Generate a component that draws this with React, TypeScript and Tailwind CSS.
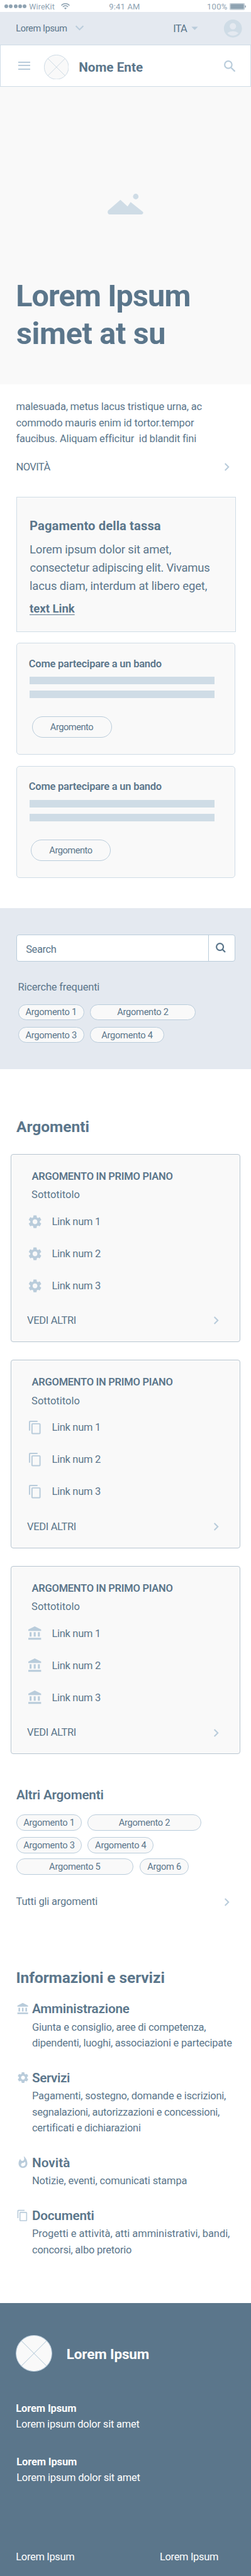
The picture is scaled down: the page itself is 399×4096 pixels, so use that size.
import type { ReactNode } from "react";
import type { IconType } from "react-icons";
import {
  MdAccountBalance,
  MdAccountCircle,
  MdArrowDropDown,
  MdChevronRight,
  MdContentCopy,
  MdSettings,
  MdWhatshot,
} from "react-icons/md";

function Placeholder({ className }: { className: string }) {
  return (
    <svg viewBox="0 0 40 40" className={className} fill="#f9f9f9" stroke="#b9ccdb">
      <circle cx="20" cy="20" r="19.6" strokeWidth="0.7" />
      <path d="M6.2 6.2 33.8 33.8M33.8 6.2 6.2 33.8" strokeWidth="0.7" />
    </svg>
  );
}

function StatusBar() {
  return (
    <div className="flex h-[19.3px] items-start bg-white text-[#8fa3b2]">
      <div className="mt-[7.2px] ml-[6.9px] flex gap-[1.5px]">
        {[0, 1, 2, 3, 4].map((i) => (
          <span key={i} className="size-[5.9px] rounded-full bg-[#8fa3b2]" />
        ))}
      </div>
      <div className="mt-[3px] ml-[4px] w-[51px] text-[12.5px] leading-[16px] tracking-[0.1px]">WireKit</div>
      <svg viewBox="0 0 28 20" className="mt-[5px] h-[10px] w-[14px]" fill="none" stroke="#8fa3b2" strokeWidth="3">
        <path d="M1 7.5C8-.5 20-.5 27 7.5" />
        <path d="M5.8 12C10.5 6.7 17.5 6.7 22.2 12" />
        <path d="M14 20l-4.2-4.6c2.4-2.2 6-2.2 8.4 0z" fill="#8fa3b2" stroke="none" />
      </svg>
      <div className="mt-[3px] ml-[62px] w-[155.6px] text-[13px] leading-[16px] tracking-[0.15px]">9:41 AM</div>
      <div className="mt-[3px] w-[36.4px] text-[13px] leading-[16px] tracking-[0.3px]">100%</div>
      <svg viewBox="0 0 52 22" className="mt-[4.7px] h-[11px] w-[26px]">
        <rect x="0.7" y="0.7" width="46.6" height="20" rx="2.5" fill="none" stroke="#8fa3b2" strokeWidth="1.2" />
        <rect x="2.6" y="2.6" width="42.8" height="16.2" rx="1" fill="#8fa3b2" />
        <path d="M48.800 7h1.200c1.300 0 2 1.500 2 3.700s-.7 3.700-2 3.700h-1.200z" fill="#8fa3b2" />
      </svg>
    </div>
  );
}

function TopBar() {
  return (
    <div className="flex h-[51.4px] items-center bg-[#e4e9f0]">
      <div className="mt-[2px] ml-[25.3px] w-[93.7px] text-[14.5px] leading-5 tracking-[-0.35px]">Lorem Ipsum</div>
      <svg viewBox="0 0 15 9" className="h-[9px] w-[15px]" fill="none" stroke="#b9ccdb" strokeWidth="2">
        <path d="M1.6 1.3 7.5 7.2 13.4 1.3" />
      </svg>
      <div className="mt-[2px] ml-[141.2px] text-[16.5px] leading-5 tracking-[-0.8px]">ITA</div>
      <MdArrowDropDown className="ml-[0.4px] size-[25px] text-[#b9ccdb]" />
      <MdAccountCircle className="ml-[30.5px] size-[34.5px] text-[#cfdce6]" />
    </div>
  );
}

function Header() {
  return (
    <header className="flex h-[67.5px] items-center border border-[#cfdce6] bg-white">
      <div className="mb-[0.5px] ml-[27.7px] flex w-[19px] flex-col gap-[3.3px]">
        <span className="h-[2.1px] bg-[#b9ccdb]" />
        <span className="h-[2.1px] bg-[#b9ccdb]" />
        <span className="h-[2.1px] bg-[#b9ccdb]" />
      </div>
      <Placeholder className="mt-[4px] ml-[22.2px] size-[39.5px]" />
      <div className="mt-[5px] ml-[15.8px] flex-1 text-[20.7px] leading-6 font-bold">Nome Ente</div>
      <svg viewBox="0 0 37 37" className="mt-[1.600px] mr-[23.800px] size-[18.500px]" fill="none" stroke="#b9ccdb">
        <circle cx="13.800" cy="13.800" r="11.500" strokeWidth="4.300" />
        <path d="M23 23.500 35 35.300" strokeWidth="4.600" />
      </svg>
    </header>
  );
}

function Hero() {
  return (
    <section className="h-[472.6px] bg-[#f9f9f9] pt-[169.4px]">
      <svg viewBox="0 0 57 33" className="ml-[170.5px] h-[33px] w-[57px]" fill="#cfdce6">
        <circle cx="44.8" cy="4.5" r="4.4" />
        <path d="M.8 26.7 20.4 9.7 31.8 20.2 36.6 13.2 56 28.7c1.300 1.300.7 4.300-2.300 4.300H3.500C.5 33-.7 29.500.8 26.700z" />
      </svg>
      <h1 className="mt-[100.3px] text-[48.5px] leading-[59.8px] font-bold">
        <span className="block pl-[25.2px] tracking-[-0.85px]">Lorem Ipsum</span>
        <span className="block pl-[26px] tracking-[-0.35px]">simet at su</span>
      </h1>
    </section>
  );
}

function MoreRow({ children, className }: { children: ReactNode; className: string }) {
  return (
    <div className={"flex h-5 items-center justify-between text-[16.5px] leading-5 " + className}>
      {children}
      <MdChevronRight className="size-[25px] text-[#b9ccdb]" />
    </div>
  );
}

function BandoCard({ pill, className }: { pill: string; className: string }) {
  return (
    <article className={"w-[348px] rounded-[5px] border border-[#cfdce6] bg-[#f9f9f9] pt-[22.9px] " + className}>
      <h3 className="ml-[19.3px] text-[16.5px] leading-5 font-semibold tracking-[-0.24px]">Come partecipare a un bando</h3>
      <div className="mt-[10.5px] ml-[20.5px] h-[11.6px] w-[293.5px] bg-[#cfdce6]" />
      <div className="mt-[10.6px] ml-[20.5px] h-[11.6px] w-[293.5px] bg-[#cfdce6]" />
      <div className={"mt-[28.8px] flex h-[34px] w-[127px] items-center justify-center rounded-full border border-[#b9ccdb] text-[14.7px] leading-5 tracking-[-0.51px] " + pill}>
        Argomento
      </div>
    </article>
  );
}

function Intro() {
  return (
    <section className="pt-[23.6px] pr-[24.5px] pb-[47.9px] pl-[25.5px]">
      <p className="text-[16.5px] leading-[25.5px] whitespace-pre">
        <span className="block tracking-[-0.21px]">malesuada, metus lacus tristique urna, ac</span>
        <span className="block tracking-[-0.17px]">commodo mauris enim id tortor.tempor</span>
        <span className="block tracking-[-0.22px]">faucibus. Aliquam efficitur  id blandit fini</span>
      </p>
      <MoreRow className="mt-[22px] mr-[1.5px]">
        <span className="tracking-[-0.6px]">NOVITÀ</span>
      </MoreRow>
      <article className="mt-[37px] h-[214.8px] border border-[#cfdce6] bg-[#f9f9f9] pt-[33.6px] pl-[20.5px]">
        <h2 className="text-[20.2px] leading-6 font-bold tracking-[0.1px]">Pagamento della tassa</h2>
        <p className="mt-3 text-[18.5px] leading-[28.6px] whitespace-nowrap">
          <span className="block tracking-[-0.18px]">Lorem ipsum dolor sit amet,</span>
          <span className="block pl-[0.5px] tracking-[-0.3px]">consectetur adipiscing elit. Vivamus</span>
          <span className="block tracking-[-0.13px]">lacus diam, interdum at libero eget,</span>
        </p>
        <a className="mt-[9.6px] inline-block text-[18.5px] leading-6 font-bold underline decoration-1 underline-offset-[2.5px]">text Link</a>
      </article>
      <BandoCard className="mt-[17px] h-[178.8px]" pill="ml-[24px]" />
      <BandoCard className="mt-[17.1px] h-[178.7px]" pill="ml-[22.5px]" />
    </section>
  );
}

function Tag({ children, className }: { children: string; className: string }) {
  return (
    <span className={"flex h-[25.4px] items-center justify-center rounded-full border border-[#b9ccdb] bg-[#f9f9f9] text-[14.7px] leading-5 tracking-[-0.3px] " + className}>
      {children}
    </span>
  );
}

function SearchSection() {
  return (
    <section className="h-[256px] bg-[#e4e9f0] pt-[41.8px] pl-[25.5px]">
      <div className="flex h-[42.7px] w-[348px] rounded-[4px] border border-[#b9ccdb] bg-white">
        <div className="flex flex-1 items-center pt-[5px] pl-[14.7px] text-[16.5px] leading-5 tracking-[-0.4px]">Search</div>
        <div className="flex w-[42px] items-center border-l border-[#b9ccdb] pl-[11px]">
          <svg viewBox="0 0 16 16" className="size-[16px]" fill="none" stroke="#5b768b">
            <circle cx="6.6" cy="6.6" r="5.5" strokeWidth="2.2" />
            <path d="M10.4 10.4 15 15" strokeWidth="2.3" />
          </svg>
        </div>
      </div>
      <div className="mt-[31.3px] ml-[3px] text-[16.5px] leading-5 tracking-[-0.2px]">Ricerche frequenti</div>
      <div className="mt-[16.7px] ml-[3.3px] flex gap-[9.1px]">
        <Tag className="w-[104.8px]">Argomento 1</Tag>
        <Tag className="w-[168.5px]">Argomento 2</Tag>
      </div>
      <div className="mt-[10.9px] ml-[3.3px] flex gap-[9.1px]">
        <Tag className="w-[104.8px]">Argomento 3</Tag>
        <Tag className="w-[118.6px]">Argomento 4</Tag>
      </div>
    </section>
  );
}

function TopicCard({ icon: Icon, iconClass }: { icon: IconType; iconClass: string }) {
  return (
    <article className="h-[299.6px] w-[365px] rounded-[4px] border border-[#b8c6d1] bg-[#f9f9f9] pt-[25px]">
      <h3 className="ml-[32.6px] text-[16.5px] leading-5 font-semibold tracking-[-0.27px]">ARGOMENTO IN PRIMO PIANO</h3>
      <div className="mt-[9.6px] ml-[32.1px] text-[16.5px] leading-5">Sottotitolo</div>
      <ul className="mt-[20.6px] flex flex-col gap-[27px]">
        {[1, 2, 3].map((n) => (
          <li key={n} className="flex h-6 items-center text-[16.5px] leading-5 tracking-[-0.3px]">
            <span className="mb-[1px] ml-[24.4px] flex w-[26px] justify-center text-[#b9ccdb]">
              <Icon className={iconClass} />
            </span>
            <span className="ml-[14px]">Link num {n}</span>
          </li>
        ))}
      </ul>
      <MoreRow className="mt-[33.2px] pr-[25.3px] pl-[25px]">
        <span className="tracking-[-0.33px]">VEDI ALTRI</span>
      </MoreRow>
    </article>
  );
}

function Topics() {
  return (
    <section className="pt-[76.8px]">
      <h2 className="ml-[26px] text-[24.5px] leading-[30px] font-bold">Argomenti</h2>
      <div className="mt-[27.6px] ml-[17px] flex flex-col gap-[28px]">
        <TopicCard icon={MdSettings} iconClass="size-[25.3px]" />
        <TopicCard icon={MdContentCopy} iconClass="size-[23.5px]" />
        <TopicCard icon={MdAccountBalance} iconClass="size-[24.4px]" />
      </div>
      <h3 className="mt-[52.4px] ml-[26px] text-[20.7px] leading-6 font-semibold tracking-[-0.2px]">Altri Argomenti</h3>
      <div className="mt-[19.7px] ml-[25.5px] flex gap-[9.1px]">
        <Tag className="w-[104.8px]">Argomento 1</Tag>
        <Tag className="w-[180.2px]">Argomento 2</Tag>
      </div>
      <div className="mt-[10.7px] ml-[25.5px] flex gap-[9.1px]">
        <Tag className="w-[104.8px]">Argomento 3</Tag>
        <Tag className="w-[104.9px]">Argomento 4</Tag>
      </div>
      <div className="mt-[8.6px] ml-[25.5px] flex gap-[10.2px]">
        <Tag className="w-[186.7px]">Argomento 5</Tag>
        <Tag className="w-[77.4px]">Argom 6</Tag>
      </div>
      <MoreRow className="mt-[33.6px] pr-[26px] pl-[25.5px]">
        <span className="tracking-[-0.2px]">Tutti gli argomenti</span>
      </MoreRow>
    </section>
  );
}

function Service({ icon: Icon, iconClass, title, titleClass, children }: { icon: IconType; iconClass: string; title: string; titleClass: string; children: ReactNode }) {
  return (
    <li className="flex">
      <span className="ml-[25.2px] flex h-6 w-[22px] shrink-0 items-center justify-center text-[#b9ccdb]">
        <Icon className={iconClass} />
      </span>
      <div className="ml-[3.8px]">
        <h3 className={"text-[20.7px] leading-6 font-semibold " + titleClass}>{title}</h3>
        <p className="mt-[4.4px] text-[16.5px] leading-[25.6px] whitespace-nowrap">{children}</p>
      </div>
    </li>
  );
}

function Services() {
  return (
    <section className="pt-[95.5px] pb-[71.5px]">
      <h2 className="ml-[25.5px] text-[24.5px] leading-[30px] font-bold tracking-[-0.08px]">Informazioni e servizi</h2>
      <ul className="mt-[22.2px] flex flex-col gap-[29.9px]">
        <Service icon={MdAccountBalance} iconClass="size-[20.3px]" title="Amministrazione" titleClass="tracking-[-0.21px]">
          <span className="block tracking-[-0.25px]">Giunta e consiglio, aree di competenza,</span>
          <span className="block tracking-[-0.24px]">dipendenti, luoghi, associazioni e partecipate</span>
        </Service>
        <Service icon={MdSettings} iconClass="size-[21.2px]" title="Servizi" titleClass="tracking-[-0.42px]">
          <span className="block tracking-[-0.22px]">Pagamenti, sostegno, domande e iscrizioni,</span>
          <span className="block tracking-[-0.29px]">segnalazioni, autorizzazioni e concessioni,</span>
          <span className="block tracking-[-0.25px]">certificati e dichiarazioni</span>
        </Service>
        <Service icon={MdWhatshot} iconClass="size-[21px]" title="Novità" titleClass="tracking-[0.09px]">
          <span className="block tracking-[-0.15px]">Notizie, eventi, comunicati stampa</span>
        </Service>
        <Service icon={MdContentCopy} iconClass="size-[19.6px]" title="Documenti" titleClass="tracking-[-0.2px]">
          <span className="block tracking-[-0.04px]">Progetti e attività, atti amministrativi, bandi,</span>
          <span className="block tracking-[-0.23px]">concorsi, albo pretorio</span>
        </Service>
      </ul>
    </section>
  );
}

function Footer() {
  return (
    <footer className="h-[434px] bg-[#5b768b] pt-[51.7px] pl-[25.3px] text-[16.5px] leading-5 text-white">
      <div className="flex items-center">
        <Placeholder className="size-[58px]" />
        <div className="mt-[2px] ml-[22.5px] text-[22.5px] leading-[26px] font-bold tracking-[-0.16px]">Lorem Ipsum</div>
      </div>
      <div className="mt-[48.5px] font-bold tracking-[-0.14px]">Lorem Ipsum</div>
      <div className="mt-[5.5px] tracking-[-0.21px]">Lorem ipsum dolor sit amet</div>
      <div className="mt-[39.6px] ml-[0.9px] font-bold tracking-[-0.14px]">Lorem Ipsum</div>
      <div className="mt-[5.6px] ml-[0.9px] tracking-[-0.21px]">Lorem ipsum dolor sit amet</div>
      <div className="mt-[105.6px] flex tracking-[-0.35px]">
        <span className="w-[228.7px]">Lorem Ipsum</span>
        <span>Lorem Ipsum</span>
      </div>
    </footer>
  );
}

export default function App() {
  return (
    <div className="h-[4096px] w-[399px] overflow-hidden bg-white font-['Roboto',sans-serif] text-[#5b768b]">
      <StatusBar />
      <TopBar />
      <Header />
      <Hero />
      <Intro />
      <SearchSection />
      <Topics />
      <Services />
      <Footer />
    </div>
  );
}
